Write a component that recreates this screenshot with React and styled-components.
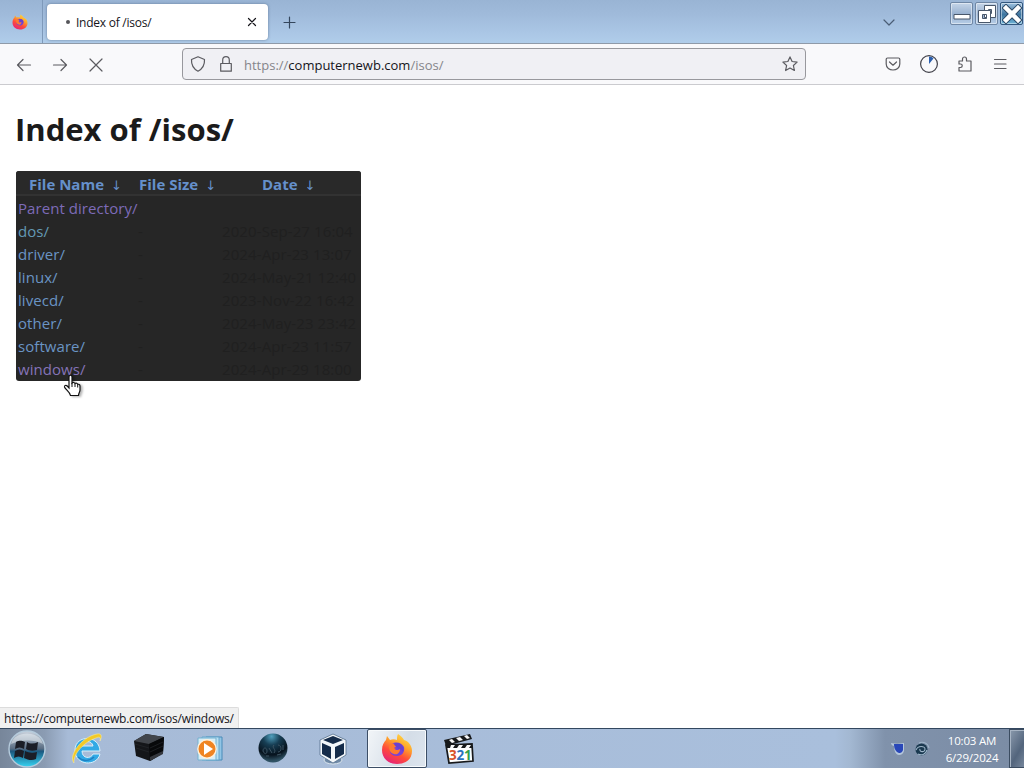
import React from "react";
import styled, { createGlobalStyle } from "styled-components";

const GlobalStyle = createGlobalStyle`
  * {
    box-sizing: border-box;
  }

  body {
    margin: 0;
    overflow: hidden;
    background-color: #ffffff;
    font-family: "Open Sans", "Noto Sans", sans-serif;
  }
`;

const Desktop = styled.div`
  width: 1024px;
  height: 768px;
  display: flex;
  flex-direction: column;
  overflow: hidden;
`;

const Icon = styled.svg`
  display: block;
  flex: none;
  width: ${props => props.$size || 16}px;
  height: ${props => props.$size || 16}px;
  fill: none;
  stroke: ${props => props.$color || "#5b5b60"};
  stroke-width: 1.2;
  stroke-linecap: round;
  stroke-linejoin: round;
`;

const Picture = styled.svg`
  display: block;
  flex: none;
  width: ${props => props.$size}px;
  height: ${props => props.$size}px;
`;

/* title bar */
const TitleBar = styled.header`
  height: 44px;
  flex: none;
  display: flex;
  align-items: flex-start;
  background: linear-gradient(#99b4d4 0%, #a0bbdb 35%, #aac6e5 75%, #b0cdea 100%);
  border-bottom: 1px solid #8f9aa8;
`;

const FirefoxView = styled.div`
  width: 43px;
  height: 43px;
  display: flex;
  align-items: center;
  justify-content: center;
  padding-right: 3px;
  border-right: 1px solid #7e99ba;
`;

const Tab = styled.div`
  width: 221px;
  height: 36px;
  margin: 4px 0 0 4px;
  padding: 0 10px 0 19px;
  display: flex;
  align-items: center;
  border-radius: 4px;
  background-color: #ffffff;
  box-shadow: 0 0 3px rgba(60, 80, 110, 0.6);
`;

const Throbber = styled.span`
  width: 4px;
  height: 4px;
  margin-right: 6px;
  border-radius: 50%;
  background-color: #55555a;
`;

const TabTitle = styled.span`
  flex: 1;
  padding-top: 1px;
  font-size: 12px;
  letter-spacing: -0.25px;
  color: #15141a;
`;

const NewTab = styled.div`
  margin: 15px 0 0 14px;
`;

const AllTabs = styled.div`
  margin: 14px 53px 0 auto;
`;

const WindowButtons = styled.div`
  display: flex;
  gap: 2px;
  margin: 2px 1px 0 0;
`;

const WindowButton = styled.div`
  width: 23px;
  height: 23px;
  display: flex;
  align-items: center;
  justify-content: center;
  border: 1px solid ${props => (props.$close ? "#31577f" : "#6f87a5")};
  border-radius: 2px;
  background: ${props =>
    props.$close
      ? "linear-gradient(#9dc0df, #3e759f 55%, #6eb4d8)"
      : "linear-gradient(#c5d5e8, #97b0cf 55%, #b7cee7)"};
  box-shadow: inset 0 0 0 1px rgba(255, 255, 255, 0.45);
`;

/* navigation bar */
const NavBar = styled.nav`
  height: 41px;
  flex: none;
  display: flex;
  align-items: center;
  padding: 0 16px;
  background-color: #f9f9fb;
  border-bottom: 1px solid #cbcbcf;
`;

const NavButtons = styled.div`
  display: flex;
  gap: 20px;
  width: 166px;
  padding-top: 1px;
`;

const UrlBar = styled.div`
  width: 624px;
  height: 32px;
  display: flex;
  align-items: center;
  padding: 0 7px;
  background-color: #f0f0f4;
  border: 1px solid #98989d;
  border-radius: 4px;
`;

const Address = styled.span`
  flex: 1;
  margin-left: 10px;
  padding-top: 2px;
  font-size: 13px;
  color: #85858a;

  b {
    font-weight: 400;
    color: #15141a;
  }
`;

const Gap = styled.span`
  width: 12px;
`;

const ToolButtons = styled.div`
  display: flex;
  align-items: center;
  gap: 19px;
  margin-left: auto;
`;

/* page */
const Page = styled.main`
  flex: 1;
  display: flex;
  flex-direction: column;
  align-items: flex-start;
  padding: 22px 16px 0 16px;
`;

const Title = styled.h1`
  margin: 0 0 20px -1px;
  font-size: 31px;
  line-height: 44px;
  color: #1b1b1b;
`;

const Listing = styled.div`
  width: 345px;
  height: 210px;
  flex: none;
  overflow: hidden;
  border-radius: 3px;
  background-color: #262626;
`;

const Row = styled.div`
  display: grid;
  grid-template-columns: 120px 83px 142px;
  height: 23px;
  line-height: 23px;
  font-size: 15px;
`;

const HeadRow = styled(Row)`
  height: 25px;
  margin-bottom: 1px;
  line-height: 27px;
  font-weight: 700;
  color: #6590cb;
  background-color: #292929;
  border-bottom: 2px solid #323232;
`;

const HeadCell = styled.span`
  padding-left: ${props => props.$left}px;
  white-space: pre;
`;

const Arrow = styled.span`
  margin-left: 7px;
  font-family: "DejaVu Sans", sans-serif;
  font-weight: 400;
  font-size: 13px;
`;

const FileLink = styled.a`
  padding-left: 2px;
  white-space: nowrap;
  letter-spacing: 0.06px;
  color: ${props => props.$color};
`;

const Dim = styled.span`
  padding-left: ${props => props.$left}px;
  letter-spacing: 0.1px;
  white-space: nowrap;
  color: #202020;
`;

const StatusLink = styled.div`
  height: 21px;
  margin: auto 0 0 -16px;
  padding: 0 4px;
  font-size: 12px;
  line-height: 22px;
  letter-spacing: -0.21px;
  color: #15141a;
  background-color: #f0f0f0;
  border: 1px solid #dcdcdc;
  border-width: 1px 1px 0 0;
  border-top-right-radius: 2px;
`;

const Cursor = styled.svg`
  position: absolute;
  left: 62px;
  top: 374px;
  width: 20px;
  height: 24px;
  filter: drop-shadow(2px 1px 1px rgba(0, 0, 0, 0.3));
`;

/* taskbar */
const TaskBar = styled.footer`
  height: 40px;
  flex: none;
  display: flex;
  align-items: center;
  border-top: 1px solid #33475f;
  background: linear-gradient(
    90deg,
    #77869a 0,
    #8b9cb3 45px,
    #a7bbd7 68px,
    #a9bfdc 835px,
    #a3b8d2 850px,
    #8092ab 885px,
    #7b8ca5 100%
  );
`;

const TaskItem = styled.div`
  width: ${props => props.$width || 62}px;
  height: 39px;
  flex: none;
  display: flex;
  align-items: center;
  justify-content: center;
`;

const ActiveItem = styled(TaskItem)`
  width: 60px;
  border: 1px solid #3c4e66;
  border-radius: 2px;
  background: linear-gradient(110deg, #f2f5f8, #d4dde7 60%, #dde5ee);
  box-shadow: inset 0 0 0 1px #f7fafc;
`;

const Tray = styled.div`
  display: flex;
  align-items: center;
  gap: 8px;
  height: 39px;
  margin-left: auto;
`;

const Clock = styled.div`
  width: 68px;
  margin: 0 -5px 0 0;
  text-align: center;
  font-size: 11.5px;
  line-height: 17px;
  letter-spacing: -0.2px;
  color: #ffffff;
  white-space: nowrap;
`;

const ShowDesktop = styled.div`
  width: 15px;
  height: 39px;
  border: 1px solid #3b4c61;
  border-right: 0;
  background: linear-gradient(120deg, #8b9aad, #53657d 60%, #77879c);
  box-shadow: inset 1px 1px 0 #a7b4c4;
`;

const FirefoxLogo = ({ size, id }) => (
  <Picture $size={size} viewBox="0 0 32 32">
    <defs>
      <linearGradient id={id} x1="0.8" y1="0" x2="0.25" y2="1">
        <stop offset="0" stopColor="#ffe14a" />
        <stop offset="0.35" stopColor="#ffa52a" />
        <stop offset="0.65" stopColor="#ff4b3a" />
        <stop offset="1" stopColor="#e3207d" />
      </linearGradient>
    </defs>
    <path
      d="M17 1c3 2 5 4 6 6 4 1 8 5 8 11 0 8-6 13-15 13S1 25 1 17c0-5 2-8 4-10l1-4 3 4c2-1 5-1 7 0 0-2 0-4 1-6z"
      fill={`url(#${id})`}
    />
    <path d="M11 11c4-3 10-1 12 3 1 5-2 9-7 9s-8-3-7-7c2 1 4 1 6 0l-5-2z" fill="#7542d8" />
    <path d="M9 11c3-1 6 0 7 2l-3 2c1 3 5 2 6 1 0 4-3 6-6 5-4-1-6-5-4-10z" fill="#ff7a2e" />
    <path d="M13 11c5-3 11 2 9 8-1-3-3-3-5-3 0-2-3-2-4-5z" fill="#6a40cd" />
  </Picture>
);

const StartOrb = () => (
  <Picture $size={40} viewBox="0 0 40 40">
    <defs>
      <linearGradient id="orb" x1="0" y1="0" x2="0" y2="1">
        <stop offset="0" stopColor="#cbd4df" />
        <stop offset="0.5" stopColor="#566a80" />
        <stop offset="0.56" stopColor="#1b587f" />
        <stop offset="1" stopColor="#35d4f3" />
      </linearGradient>
    </defs>
    <circle cx="20" cy="20" r="18" fill="url(#orb)" stroke="#b5cbdc" strokeWidth="1.4" />
    <path d="M4 15C7 1 33 1 36 15 25 10 15 11 4 15z" fill="#eef3f8" opacity="0.5" />
    <path
      d="M9 13c4-2 6-1 9 0l-1 7c-3-2-6-2-9 0zM20 13c3 2 7 2 11 0l-1 8c-4 1-8 1-11-1zM8 22c3-2 6-2 9 0l-1 7c-3-2-6-2-9 0zM18 22c4 2 8 2 12 1l-1 7c-4 2-8 1-12-1z"
      fill="#1b1e27"
    />
  </Picture>
);

const ExplorerIcon = () => (
  <Picture $size={34} viewBox="0 0 34 34">
    <path
      d="M30 19H12c0 8 9 8 11 3h7c-3 13-25 12-25-4C5 3 29 2 30 19zM12 14h11c-1-6-10-6-11 0z"
      fill="#32a9e5"
      stroke="#d8f1fc"
      strokeWidth="1"
    />
    <path d="M8 25c5 5 12 4 16 0" fill="none" stroke="#1c82c4" strokeWidth="1.5" />
    <path
      d="M4 31C-2 24 11 5 27 2c5-1 5 3 3 7 1-3 0-5-4-3C14 10 3 22 4 31z"
      fill="#f2c928"
      stroke="#fff0a0"
      strokeWidth="0.5"
    />
  </Picture>
);

const BoxIcon = () => (
  <Picture $size={34} viewBox="0 0 34 34">
    <path d="M2 9 14 2l18 3-1 16-13 8L4 24z" fill="#141619" />
    <path d="M2 9 14 2l18 3-15 7z" fill="#41454b" />
    <path d="m17 12 15-7-1 16-13 8z" fill="#08090b" />
    <path d="m3 12 14 4M4 16l13 4M18 16l13-6M18 20l13-6" stroke="#25282d" strokeWidth="0.7" />
    <path d="m18 25 13-6v3l-13 7z" fill="#35383e" />
  </Picture>
);

const MediaIcon = () => (
  <Picture $size={32} viewBox="0 0 32 32">
    <path d="M12 4h16v23H12z" fill="#92c5e5" stroke="#488bb8" />
    <path d="M8 4h17v23H8z" fill="#b9e0f2" stroke="#66a6cc" />
    <path d="M4 5h18v22H4z" fill="#d7eef7" stroke="#74b1d0" />
    <circle cx="13" cy="16" r="9.2" fill="#ef8422" stroke="#fff1dc" strokeWidth="1.4" />
    <path d="m10 10 9 6-9 6z" fill="#ffffff" />
  </Picture>
);

const GlobeIcon = () => (
  <Picture $size={32} viewBox="0 0 32 32">
    <defs>
      <radialGradient id="globe" cx="0.45" cy="0.1" r="0.85">
        <stop offset="0" stopColor="#4f9fbd" />
        <stop offset="0.35" stopColor="#173e54" />
        <stop offset="0.75" stopColor="#07131e" />
        <stop offset="1" stopColor="#305365" />
      </radialGradient>
    </defs>
    <circle cx="16" cy="15" r="14.5" fill="url(#globe)" />
    <path
      d="M6 18c0-4 4-4 4 0s-3 3-4 0M12 15l3 5M17 12c-3 3 3 4 0 8M21 12c4 0 4 7 0 7M26 12v5M9 23h3M20 22l4-1"
      fill="none"
      stroke="#3d5362"
      strokeWidth="1"
    />
  </Picture>
);

const VirtualBoxIcon = () => (
  <Picture $size={34} viewBox="0 0 34 34">
    <ellipse cx="17" cy="28" rx="9" ry="4" fill="#6f8aa8" stroke="#dce6ee" />
    <path d="M17 2 30 8v15l-13 8L4 23V8z" fill="#f3f7fa" stroke="#55708d" strokeWidth="0.8" />
    <path d="m17 4 10 4-10 4L7 8zM6 11l9 4v12l-9-5zM28 11l-9 4v12l9-5z" fill="#152c4a" />
  </Picture>
);

const ClapperIcon = () => (
  <Picture $size={34} viewBox="0 0 34 34">
    <path d="m4 13 26-1 1 17-24 2z" fill="#ffffff" stroke="#17191b" strokeWidth="1.7" />
    <path d="m2 8 26-6 2 5L4 14z" fill="#17191b" />
    <path d="m7 8 3-1 3 3-3 1zM14 6l4-1 3 3-4 1zM22 4l3-1 3 3-3 1z" fill="#f7f7f7" />
    <path d="m5 13 25-1v4H5z" fill="#17191b" />
    <path d="m9 13 4 0-2 3H8zM17 13h4l-2 3h-4zM25 13h4l-2 3h-4z" fill="#f7f7f7" />
    <text
      y="28"
      fontFamily="Open Sans, sans-serif"
      fontWeight="700"
      fontSize="13.5"
    >
      <tspan x="7" fill="#d9552b">3</tspan>
      <tspan x="14.5" fill="#2b73bd">2</tspan>
      <tspan x="22" fill="#36a04b">1</tspan>
    </text>
  </Picture>
);

const files = [
  { name: "Parent directory/", color: "#7d6bb8" },
  { name: "dos/", size: "-", date: "2020-Sep-27 16:04", color: "#6399b4" },
  { name: "driver/", size: "-", date: "2024-Apr-23 13:07", color: "#6a94c4" },
  { name: "linux/", size: "-", date: "2024-May-21 12:40", color: "#6a94c4" },
  { name: "livecd/", size: "-", date: "2023-Nov-22 16:42", color: "#6a94c4" },
  { name: "other/", size: "-", date: "2024-May-23 23:42", color: "#6a94c4" },
  { name: "software/", size: "-", date: "2024-Apr-23 11:57", color: "#6a94c4" },
  { name: "windows/", size: "-", date: "2024-Apr-29 18:00", color: "#8573b8" }
];

const Browser = () => (
  <>
    <TitleBar>
      <FirefoxView>
        <FirefoxLogo size={16} id="fox-small" />
      </FirefoxView>
      <Tab>
        <Throbber />
        <TabTitle>Index of /isos/</TabTitle>
        <Icon $size={12} $color="#15141a" viewBox="0 0 12 12">
          <path d="m2.500 2.500 7 7M9.500 2.500l-7 7" />
        </Icon>
      </Tab>
      <NewTab>
        <Icon $size={14} $color="#34465c" viewBox="0 0 14 14">
          <path d="M7.500 2v11M2 7.500h11" />
        </Icon>
      </NewTab>
      <AllTabs>
        <Icon $color="#4a5d75" viewBox="0 0 16 16">
          <path d="m3 6 5 5 5-5" />
        </Icon>
      </AllTabs>
      <WindowButtons>
        <WindowButton>
          <Picture $size={20} viewBox="0 0 20 20">
            <path d="M2 10.500h16v4.500H2z" fill="#ffffff" stroke="#49576a" />
          </Picture>
        </WindowButton>
        <WindowButton>
          <Picture $size={20} viewBox="0 0 20 20">
            <path d="M7.500 1.500h11v12h-11zM11.500 5.500v4h3v-4z" fill="#ffffff" stroke="#49576a" fillRule="evenodd" />
            <path d="M1.500 6.500h12v12h-12zM5.500 10.500v4h4v-4z" fill="#ffffff" stroke="#49576a" fillRule="evenodd" />
          </Picture>
        </WindowButton>
        <WindowButton $close>
          <Picture $size={20} viewBox="0 0 20 20">
            <path d="m4 4 12 12M16 4 4 16" stroke="#2c4866" strokeWidth="6.500" strokeLinecap="square" />
            <path d="m4 4 12 12M16 4 4 16" stroke="#ffffff" strokeWidth="4.500" strokeLinecap="square" />
          </Picture>
        </WindowButton>
      </WindowButtons>
    </TitleBar>
    <NavBar>
      <NavButtons>
        <Icon viewBox="0 0 16 16">
          <path d="M14.500 8h-13M7 2.500 1.500 8 7 13.500" />
        </Icon>
        <Icon viewBox="0 0 16 16">
          <path d="M1.500 8h13M9 2.500 14.500 8 9 13.500" />
        </Icon>
        <Icon viewBox="0 0 16 16">
          <path d="m2 2 12 12M14 2 2 14" />
        </Icon>
      </NavButtons>
      <UrlBar>
        <Icon viewBox="0 0 16 16">
          <path d="M8 .8 14.500 3.500c.3 5-1.500 9-6.500 11.700C3 12.500 1.200 8.500 1.500 3.500z" />
        </Icon>
        <Gap />
        <Icon viewBox="0 0 16 16">
          <path d="M2.700 7.500h10.600v7.700H2.700zM4.700 7.300V4a3.300 3.300 0 0 1 6.600 0v3.300" />
        </Icon>
        <Address>
          https://<b>computernewb.com</b>/isos/
        </Address>
        <Icon viewBox="0 0 16 16">
          <path d="m8 .9 2.100 4.600 5 .6-3.700 3.400 1 5L8 12l-4.400 2.500 1-5L.9 6.100l5-.6z" />
        </Icon>
      </UrlBar>
      <ToolButtons>
        <Icon viewBox="0 0 16 16">
          <path d="M2.500 2h11c.8 0 1.300.5 1.300 1.300V8c0 8-13.600 8-13.600 0V3.300C1.200 2.500 1.700 2 2.500 2zM4.500 6 8 9.200 11.500 6" />
        </Icon>
        <Picture $size={18} viewBox="1 1 18 18">
          <circle cx="10" cy="10" r="8.400" fill="none" stroke="#42424a" strokeWidth="1.200" />
          <path d="M10 10V2.500c2 0 3.500.7 4.500 2z" fill="#2b5fae" />
        </Picture>
        <Icon viewBox="0 0 16 16">
          <path d="M2 5h3.500V3a2 2 0 0 1 4 0v2H14v10H2v-3.500h1.500a1.700 1.700 0 0 0 0-3.500H2z" />
        </Icon>
        <Icon viewBox="0 0 16 16">
          <path d="M2.500 3.500h11.500M2.500 8h11.500M2.500 12.500h11.500" />
        </Icon>
      </ToolButtons>
    </NavBar>
  </>
);

const App = () => {
  return (
    <>
      <GlobalStyle />
      <Desktop>
        <Browser />
        <Page>
          <Title>Index of /isos/</Title>
          <Listing>
            <HeadRow>
              <HeadCell $left={13}>File Name<Arrow>↓</Arrow></HeadCell>
              <HeadCell $left={3}>File Size<Arrow>↓</Arrow></HeadCell>
              <HeadCell $left={43}>Date<Arrow>↓</Arrow></HeadCell>
            </HeadRow>
            {files.map(file => (
              <Row key={file.name}>
                <FileLink $color={file.color}>{file.name}</FileLink>
                <Dim $left={2}>{file.size}</Dim>
                <Dim $left={3}>{file.date}</Dim>
              </Row>
            ))}
          </Listing>
          <StatusLink>https://computernewb.com/isos/windows/</StatusLink>
        </Page>
        <TaskBar>
          <TaskItem $width={54}>
            <StartOrb />
          </TaskItem>
          <TaskItem $width={66}>
            <ExplorerIcon />
          </TaskItem>
          <TaskItem $width={58}>
            <BoxIcon />
          </TaskItem>
          <TaskItem $width={64}>
            <MediaIcon />
          </TaskItem>
          <TaskItem>
            <GlobeIcon />
          </TaskItem>
          <TaskItem $width={58}>
            <VirtualBoxIcon />
          </TaskItem>
          <TaskItem $width={5} />
          <ActiveItem>
            <FirefoxLogo size={32} id="fox-large" />
          </ActiveItem>
          <TaskItem $width={64}>
            <ClapperIcon />
          </TaskItem>
          <Tray>
            <Picture $size={16} viewBox="0 0 16 16">
              <path d="M1 2c4 1 8 1 13 0v8c-1 3-3 4-5 4-3 0-5-4-5-9C3 5 1 4 1 2z" fill="#b5c7dc" />
              <path d="M4 3h9v6c-1 3-3 3-4 3-3-1-5-4-5-9z" fill="#2947b8" />
            </Picture>
            <Picture $size={16} viewBox="0 0 16 16">
              <circle cx="7.500" cy="8.500" r="6" fill="#1a3950" />
              <path d="M5 2c4-2 9 0 10 5M2 9c2-5 9-4 9-1 0 4-6 3-5 0M4 13c4 2 8 0 9-4" fill="none" stroke="#9fb6ca" strokeWidth="1.100" />
            </Picture>
            <Clock>
              10:03 AM
              <br />
              6/29/2024
            </Clock>
            <ShowDesktop />
          </Tray>
        </TaskBar>
      </Desktop>
      <Cursor viewBox="0 0 20 24">
        <path
          d="M7 12V3c0-2.500 3-2.500 3 0v6c1-1 2.500-.6 3 .6 1-.8 2.300-.4 2.700.8 1-.4 2.300.2 2.300 1.600v4c0 2-1.500 3-1.500 5.500H8.500C8 18 3.500 15.500 2.500 13c-.4-1.700 1.600-2 2.700-1L7 14z"
          fill="#ffffff"
          stroke="#111111"
          strokeWidth="1.200"
        />
        <path d="M10 9v4M13 10v3M15.700 11v2.500" stroke="#111111" />
      </Cursor>
    </>
  );
};

export default App;
